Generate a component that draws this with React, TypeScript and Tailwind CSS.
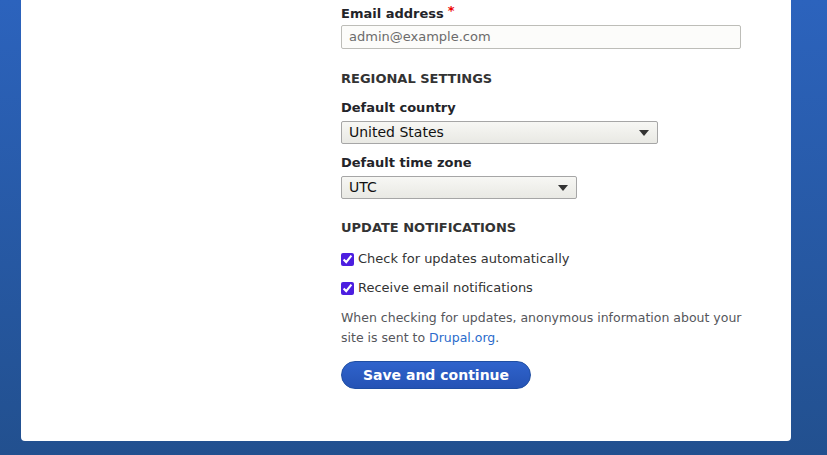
import React from 'react';

const font = { fontFamily: '"DejaVu Sans", "Liberation Sans", sans-serif' };

const Label = ({ children, required }: { children: React.ReactNode; required?: boolean }) => (
  <div className="text-[13px] leading-[18px] font-bold text-[#232429]">
    {children}
    {required && <span className="ml-[4px] text-[#e00] relative -top-[3px]">*</span>}
  </div>
);

const Select = ({ value, width }: { value: string; width: string }) => (
  <div
    className={`${width} h-[23px] mt-[4px] flex items-center justify-between pl-[7px] pr-[8px] border border-[#a6a6a6] rounded-[2px] bg-gradient-to-b from-[#f7f7f4] to-[#e9e9e4] text-[14px] text-[#111]`}
  >
    <span>{value}</span>
    <svg width="10" height="6" viewBox="0 0 10 6">
      <path d="M0 0h10L5 6z" fill="#333" />
    </svg>
  </div>
);

const Check = ({ label, className }: { label: string; className?: string }) => (
  <label className={`flex items-center h-[20px] text-[13px] text-[#333] ${className ?? ''}`}>
    <input type="checkbox" defaultChecked className="w-[13px] h-[13px] m-0 mr-[4px] accent-[#4c1ee0]" />
    {label}
  </label>
);

export default function App() {
  return (
    <div style={font} className="w-[827px] h-[455px] overflow-hidden bg-gradient-to-b from-[#2c63bd] to-[#22508f]">
      <div className="mx-[21px] w-[770px] h-[441px] bg-white rounded-b-[4px] grid grid-cols-[320px_400px]">
        <div />
        <div className="flex flex-col pt-[5px]">
          <Label required>Email address</Label>
          <div className="mt-[2px] h-[24px] w-[400px] flex items-center px-[7px] border border-[#bdbdb8] rounded-[2px] bg-[#fcfcfa] text-[13px] text-[#6b6b6b]">
            admin@example.com
          </div>

          <div className="mt-[21px] text-[13px] leading-[18px] font-bold text-[#333] uppercase">Regional settings</div>

          <div className="mt-[11px]">
            <Label>Default country</Label>
          </div>
          <Select value="United States" width="w-[317px]" />

          <div className="mt-[10px]">
            <Label>Default time zone</Label>
          </div>
          <Select value="UTC" width="w-[236px]" />

          <div className="mt-[20px] text-[13px] leading-[18px] font-bold text-[#333] uppercase">Update notifications</div>

          <Check label="Check for updates automatically" className="mt-[12px]" />
          <Check label="Receive email notifications" className="mt-[9px]" />

          <p className="mt-[10px] w-[410px] text-[12.5px] leading-[20px] text-[#55565b]">
            When checking for updates, anonymous information about your site is sent to{' '}
            <a href="#" className="text-[#2a6bcc]">Drupal.org</a>.
          </p>

          <button className="mt-[13px] w-[190px] h-[28px] rounded-full border border-[#1f4ea3] bg-gradient-to-b from-[#2f63cc] to-[#2553b5] text-white text-[14px] font-bold">
            Save and continue
          </button>
        </div>
      </div>
    </div>
  );
}
